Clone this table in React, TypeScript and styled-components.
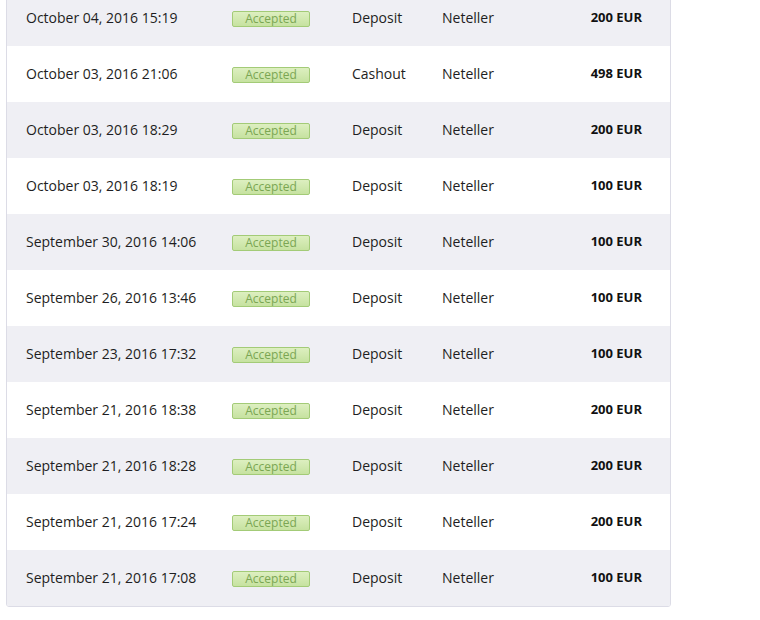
import * as React from 'react';
import styled, { createGlobalStyle } from 'styled-components';

const GlobalStyle = createGlobalStyle`
  html, body {
    margin: 0;
    padding: 0;
    background: #ffffff;
    font-family: 'Open Sans', 'Liberation Sans', sans-serif;
  }
`;

const Page = styled.div`
  padding: 0 0 0 6px;
  margin-top: -11px;
`;

const Card = styled.div`
  width: 663px;
  border: 1px solid #dcdce6;
  border-radius: 0 0 3px 3px;
  overflow: hidden;
`;

const Row = styled.div<{ striped: boolean }>`
  display: grid;
  grid-template-columns: 206px 120px 90px 1fr auto;
  align-items: center;
  box-sizing: border-box;
  height: 56px;
  padding: 0 28px 2px 19px;
  background: ${props => (props.striped ? '#efeff4' : '#ffffff')};
  color: #1e1e22;
  font-size: 14px;
`;

const Cell = styled.div`
  white-space: nowrap;
`;

const Badge = styled.span`
  display: inline-block;
  box-sizing: border-box;
  width: 78px;
  height: 16px;
  line-height: 14px;
  text-align: center;
  font-size: 12px;
  color: #7ba653;
  background: linear-gradient(#ddefc0, #c6e2a0);
  border: 1px solid #a3cb77;
  border-radius: 2px;
  vertical-align: middle;
`;

const Amount = styled.div`
  font-size: 13px;
  font-weight: 700;
  color: #111;
  text-align: right;
`;

interface ITransaction {
  date: string;
  type: string;
  amount: string;
}

const transactions: ITransaction[] = [
  { date: 'October 04, 2016 15:19', type: 'Deposit', amount: '200 EUR' },
  { date: 'October 03, 2016 21:06', type: 'Cashout', amount: '498 EUR' },
  { date: 'October 03, 2016 18:29', type: 'Deposit', amount: '200 EUR' },
  { date: 'October 03, 2016 18:19', type: 'Deposit', amount: '100 EUR' },
  { date: 'September 30, 2016 14:06', type: 'Deposit', amount: '100 EUR' },
  { date: 'September 26, 2016 13:46', type: 'Deposit', amount: '100 EUR' },
  { date: 'September 23, 2016 17:32', type: 'Deposit', amount: '100 EUR' },
  { date: 'September 21, 2016 18:38', type: 'Deposit', amount: '200 EUR' },
  { date: 'September 21, 2016 18:28', type: 'Deposit', amount: '200 EUR' },
  { date: 'September 21, 2016 17:24', type: 'Deposit', amount: '200 EUR' },
  { date: 'September 21, 2016 17:08', type: 'Deposit', amount: '100 EUR' },
];

export default function App() {
  return (
    <Page>
      <GlobalStyle />
      <Card>
        {transactions.map((t, i) => (
          <Row key={i} striped={i % 2 === 0}>
            <Cell>{t.date}</Cell>
            <Cell><Badge>Accepted</Badge></Cell>
            <Cell>{t.type}</Cell>
            <Cell>Neteller</Cell>
            <Amount>{t.amount}</Amount>
          </Row>
        ))}
      </Card>
    </Page>
  );
}
